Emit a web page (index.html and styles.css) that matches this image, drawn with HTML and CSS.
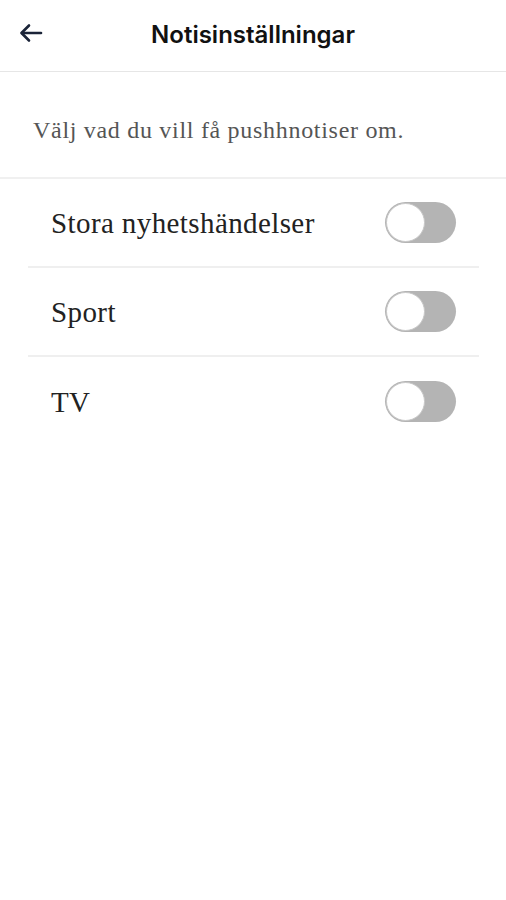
FILE: index.html
```html
<!DOCTYPE html>
<html lang="sv">
<head>
<meta charset="utf-8">
<link rel="stylesheet" href="styles.css">
</head>
<body>
<header class="topbar">
  <button class="back" aria-label="Tillbaka">
    <svg width="24" height="20" viewBox="0 0 24 20" fill="none" stroke="#1b2438" stroke-width="2.6" stroke-linecap="round" stroke-linejoin="round">
      <path d="M22 10H3"/>
      <path d="M10 2.5L2.5 10L10 17.5"/>
    </svg>
  </button>
  <h1 class="title">Notisinställningar</h1>
</header>
<p class="intro">Välj vad du vill få pushhnotiser om.</p>
<ul class="list">
  <li class="row"><span class="label">Stora nyhetshändelser</span><span class="toggle"><span class="knob"></span></span></li>
  <li class="row"><span class="label">Sport</span><span class="toggle"><span class="knob"></span></span></li>
  <li class="row"><span class="label">TV</span><span class="toggle"><span class="knob"></span></span></li>
</ul>
</body>
</html>
```
FILE: styles.css
```css
* { box-sizing: border-box; }
html, body { margin: 0; padding: 0; background: #fff; }
body { width: 506px; height: 900px; }

.topbar {
  position: relative;
  height: 72px;
  border-bottom: 1px solid #e6e6e6;
  display: flex;
  align-items: center;
  justify-content: center;
}
.back {
  position: absolute;
  left: 19px;
  top: 23px;
  border: 0;
  background: none;
  padding: 0;
  display: flex;
}
.title {
  margin: 0;
  font-family: Inter, "Liberation Sans", sans-serif;
  font-weight: 600;
  font-size: 24px;
  color: #111;
  padding-bottom: 2px;
}

.intro {
  margin: 0;
  height: 107px;
  padding: 45px 0 0 33px;
  font-family: "Liberation Serif", serif;
  font-size: 24px;
  letter-spacing: 0.7px;
  color: #555;
  border-bottom: 2px solid #f0f0f0;
}

.list {
  list-style: none;
  margin: 0;
  padding: 0 27px 0 28px;
}
.row {
  height: 89px;
  display: flex;
  align-items: center;
  justify-content: space-between;
  padding: 0 23px 0 23px;
  border-bottom: 2px solid #efefef;
}
.row:last-child { border-bottom: 0; }
.label {
  font-family: "Liberation Serif", serif;
  font-size: 29px;
  letter-spacing: 0.4px;
  color: #222;
  padding-top: 2px;
}
.toggle {
  width: 71px;
  height: 41px;
  border-radius: 21px;
  background: #b4b4b4;
  display: flex;
  align-items: center;
  padding-left: 1px;
}
.knob {
  width: 39px;
  height: 39px;
  border-radius: 50%;
  background: #fff;
  border: 1px solid #c8c8c8;
}
```
